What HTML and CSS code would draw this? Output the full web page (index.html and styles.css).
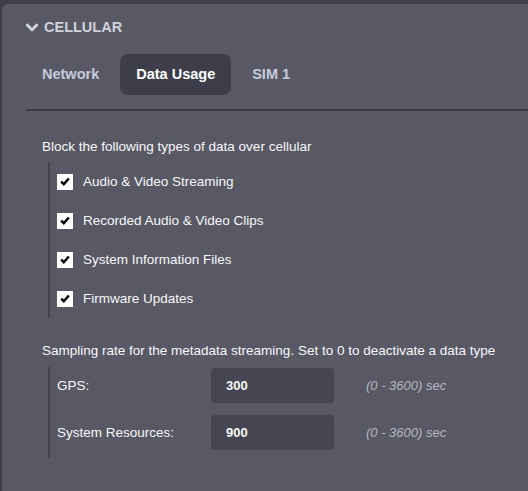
FILE: index.html
```html
<!DOCTYPE html>
<html lang="en">
<head>
  <meta charset="UTF-8" />
  <title>Cellular - Data Usage</title>
  <link rel="stylesheet" href="styles.css">
</head>
<body>

<div class="panel">
  <div class="panel-head">
    <svg class="chevron" width="12" height="9" viewBox="0 0 12 9">
      <path d="M1.2 2 L6 6.8 L10.8 2" fill="none" stroke="currentColor" stroke-width="3" stroke-linecap="round" stroke-linejoin="round"/>
    </svg>
    <span>CELLULAR</span>
  </div>

  <div class="tabs">
    <a class="tab">Network</a>
    <a class="tab active">Data Usage</a>
    <a class="tab">SIM 1</a>
  </div>

  <div class="content">
    <p class="section-title">Block the following types of data over cellular</p>
    <div class="group">
      <label class="check-row"><span class="box"><svg width="10" height="9" viewBox="0 0 10 9"><path d="M1.2 4.6 L3.8 7.2 L8.8 1.5" fill="none" stroke="#000" stroke-width="2.5"/></svg></span>Audio &amp; Video Streaming</label>
      <label class="check-row"><span class="box"><svg width="10" height="9" viewBox="0 0 10 9"><path d="M1.2 4.6 L3.8 7.2 L8.8 1.5" fill="none" stroke="#000" stroke-width="2.5"/></svg></span>Recorded Audio &amp; Video Clips</label>
      <label class="check-row"><span class="box"><svg width="10" height="9" viewBox="0 0 10 9"><path d="M1.2 4.6 L3.8 7.2 L8.8 1.5" fill="none" stroke="#000" stroke-width="2.5"/></svg></span>System Information Files</label>
      <label class="check-row"><span class="box"><svg width="10" height="9" viewBox="0 0 10 9"><path d="M1.2 4.6 L3.8 7.2 L8.8 1.5" fill="none" stroke="#000" stroke-width="2.5"/></svg></span>Firmware Updates</label>
    </div>

    <p class="section-title second">Sampling rate for the metadata streaming. Set to 0 to deactivate a data type</p>
    <div class="group fields">
      <div class="field-row">
        <span class="field-label">GPS:</span>
        <div class="field-input">300</div>
        <span class="field-hint">(0 - 3600) sec</span>
      </div>
      <div class="field-row">
        <span class="field-label">System Resources:</span>
        <div class="field-input">900</div>
        <span class="field-hint">(0 - 3600) sec</span>
      </div>
    </div>
  </div>
</div>

</body>
</html>
```

FILE: styles.css
```css
body {
  margin: 0;
  background: #3e3f4a;
  font-family: "Liberation Sans", Arial, sans-serif;
  color: #f7f7f8;
}
.panel {
  margin: 4px 0 4px 2px;
  height: 454px;
  padding: 14px 0 29px 24px;
  background: #585965;
  border-radius: 6px 0 0 6px;
}
.panel-head {
  display: flex;
  align-items: center;
  gap: 6px;
  height: 18px;
  color: #cfd1da;
  font-weight: bold;
  font-size: 14.5px;
}
.tabs {
  display: flex;
  gap: 5px;
  margin-top: 18px;
  padding-bottom: 14px;
  border-bottom: 2px solid #3b3c46;
}
.tab {
  padding: 12px 16px;
  line-height: 17px;
  font-size: 14.5px;
  font-weight: bold;
  color: #c6cadd;
  border-radius: 8px;
}
.tab.active {
  background: #3d3e49;
  color: #ffffff;
}
.content {
  padding-left: 16px;
}
.section-title {
  margin: 27px 0 6px;
  line-height: 18px;
  font-size: 13.5px;
}
.section-title.second {
  margin: 24px 0 7px;
}
.group {
  margin-left: 6px;
  border-left: 2px solid #41424d;
  padding-left: 7px;
}
.check-row {
  display: flex;
  align-items: center;
  gap: 10px;
  height: 39px;
  font-size: 13.5px;
}
.box {
  display: flex;
  align-items: center;
  justify-content: center;
  width: 16px;
  height: 16px;
  background: #ffffff;
}
.fields {
  padding-top: 1px;
  padding-bottom: 8px;
  display: flex;
  flex-direction: column;
  gap: 12px;
}
.field-row {
  display: flex;
  align-items: center;
  height: 35px;
  font-size: 13.5px;
}
.field-label {
  width: 154px;
}
.field-input {
  width: 108px;
  height: 35px;
  line-height: 35px;
  padding-left: 15px;
  background: #454652;
  border-radius: 4px;
  font-weight: bold;
  font-size: 13px;
}
.field-hint {
  margin-left: 32px;
  font-style: italic;
  font-size: 13px;
  color: #b3b5c0;
}
```
